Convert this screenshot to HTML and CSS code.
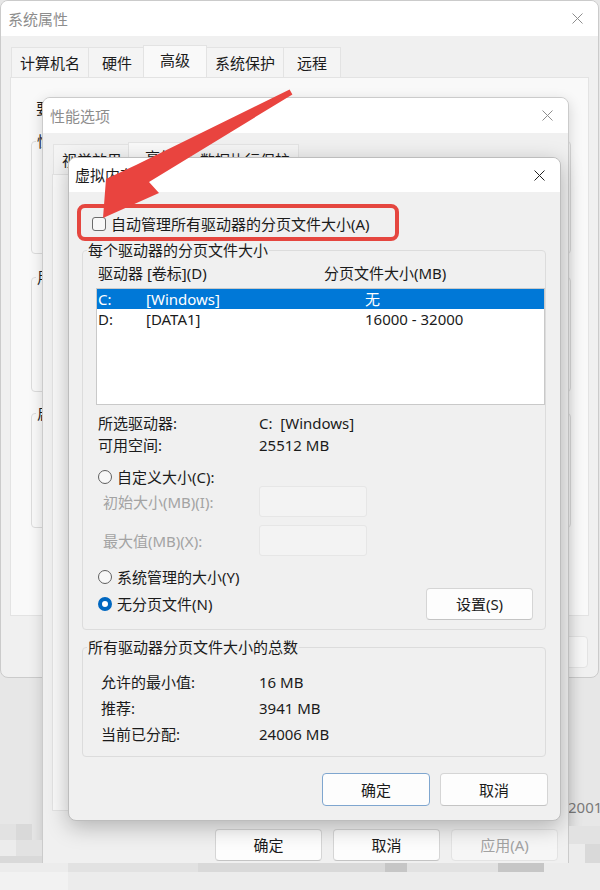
FILE: index.html
```html
<!DOCTYPE html>
<html lang="zh-CN">
<head>
<meta charset="utf-8">
<title>虚拟内存</title>
<link rel="stylesheet" href="styles.css">
</head>
<body>
<div class="bgtext">2001</div>

<div class="win sys">
  <div class="titlebar"><span class="title">系统属性</span><svg class="x" width="11" height="11" viewBox="0 0 11 11"><path d="M0.5 0.5L10.5 10.5M10.5 0.5L0.5 10.5"/></svg></div>
  <div class="tabs">
    <div class="tab">计算机名</div>
    <div class="tab">硬件</div>
    <div class="tab on">高级</div>
    <div class="tab">系统保护</div>
    <div class="tab">远程</div>
  </div>
  <div class="panel">
    <div class="notice">要进行大多数更改，你必须作为管理员登录。</div>
    <fieldset class="sgroup g1"><legend>性能</legend></fieldset>
    <fieldset class="sgroup g2"><legend>用户配置文件</legend></fieldset>
    <fieldset class="sgroup g3"><legend>启动和故障恢复</legend></fieldset>
  </div>
  <div class="footer sysfoot">
    <div class="btn">确定</div>
    <div class="btn">取消</div>
    <div class="btn dis">应用(A)</div>
  </div>
</div>

<div class="win perf">
  <div class="titlebar"><span class="title">性能选项</span><svg class="x" width="11" height="11" viewBox="0 0 11 11"><path d="M0.5 0.5L10.5 10.5M10.5 0.5L0.5 10.5"/></svg></div>
  <div class="tabs">
    <div class="tab">视觉效果</div>
    <div class="tab on">高级</div>
    <div class="tab">数据执行保护</div>
  </div>
  <div class="panel"></div>
  <div class="footer perffoot">
    <div class="btn">确定</div>
    <div class="btn">取消</div>
    <div class="btn dis">应用(A)</div>
  </div>
</div>

<div class="win vm">
  <div class="titlebar"><span class="title">虚拟内存</span><svg class="x" width="11" height="11" viewBox="0 0 11 11"><path d="M0.5 0.5L10.5 10.5M10.5 0.5L0.5 10.5"/></svg></div>
  <div class="vmbody">
    <div class="checkrow"><span class="checkbox"></span>自动管理所有驱动器的分页文件大小(A)</div>

    <fieldset class="group gdrive">
      <legend>每个驱动器的分页文件大小</legend>
      <div class="gbody">
        <div class="colhead"><span>驱动器 [卷标](D)</span><span>分页文件大小(MB)</span></div>
        <div class="list">
          <div class="lrow sel"><span>C:</span><span>[Windows]</span><span>无</span></div>
          <div class="lrow"><span>D:</span><span>[DATA1]</span><span>16000 - 32000</span></div>
        </div>
        <div class="info">
          <span>所选驱动器:</span><span>C:&nbsp;&nbsp;[Windows]</span>
          <span>可用空间:</span><span>25512 MB</span>
        </div>
        <div class="radiorow r1"><span class="radio"></span>自定义大小(C):</div>
        <div class="inrow i1"><span class="dislabel">初始大小(MB)(I):</span><span class="input"></span></div>
        <div class="inrow i2"><span class="dislabel">最大值(MB)(X):</span><span class="input"></span></div>
        <div class="radiorow r2"><span class="radio"></span>系统管理的大小(Y)</div>
        <div class="lastrow">
          <div class="radiorow"><span class="radio on"></span>无分页文件(N)</div>
          <div class="btn set">设置(S)</div>
        </div>
      </div>
    </fieldset>

    <fieldset class="group gtotal">
      <legend>所有驱动器分页文件大小的总数</legend>
      <div class="gbody totals">
        <span>允许的最小值:</span><span>16 MB</span>
        <span>推荐:</span><span>3941 MB</span>
        <span>当前已分配:</span><span>24006 MB</span>
      </div>
    </fieldset>

    <div class="footer vmfoot">
      <div class="btn def">确定</div>
      <div class="btn">取消</div>
    </div>
  </div>
</div>

<div class="mosaic">
  <span class="mb m1" style="left:0;top:824px;width:16px;height:16px"></span>
  <span class="mb m2" style="left:16px;top:824px;width:16px;height:16px"></span>
  <span class="mb m3" style="left:0;top:840px;width:16px;height:16px"></span>
  <span class="mb m1" style="left:16px;top:840px;width:26px;height:16px"></span>
  <span class="mb m2" style="left:0;top:856px;width:42px;height:10px"></span>
  <span class="mb m3" style="left:0;top:863px;width:600px;height:27px"></span>
  <span class="mb m1" style="left:68px;top:863px;width:130px;height:9px"></span>
  <span class="mb m2" style="left:198px;top:863px;width:187px;height:9px"></span>
  <span class="mb m4" style="left:385px;top:863px;width:22px;height:9px"></span>
  <span class="mb m1" style="left:407px;top:863px;width:91px;height:9px"></span>
  <span class="mb m4" style="left:498px;top:863px;width:46px;height:9px"></span>
  <span class="mb m5" style="left:0;top:872px;width:68px;height:18px"></span>
  <span class="mb m1" style="left:569px;top:826px;width:31px;height:18px"></span>
  <span class="mb m3" style="left:569px;top:844px;width:16px;height:19px"></span>
  <span class="mb m2" style="left:585px;top:844px;width:15px;height:19px"></span>
</div>

<svg class="annot" width="600" height="890" viewBox="0 0 600 890">
  <rect x="79" y="206" width="318" height="33" rx="6" ry="6" fill="none" stroke="#e5463f" stroke-width="4"/>
  <polygon points="289.6,89.6 136,165 106,179 103,218 159,193 149,182 292.4,94.4" fill="#e9443f"/>
</svg>
</body>
</html>
```

FILE: styles.css
```css
* { box-sizing: border-box; }

body {
  margin: 0;
  width: 600px;
  height: 890px;
  overflow: hidden;
  position: relative;
  background: #e7e7e7;
  font: 15px/20px "Noto Sans", "Noto Sans CJK SC", sans-serif;
  color: #1b1b1b;
}

.bgtext {
  position: absolute;
  left: 568px;
  top: 797px;
  color: #7a7a7a;
  font-size: 15px;
  z-index: 0;
}

.win {
  position: absolute;
  display: flex;
  flex-direction: column;
  background: #f0f0f0;
  border: 1px solid #cbcbcb;
  border-radius: 8px;
  overflow: hidden;
}

.sys { left: 0; top: 0; width: 599px; height: 678px; z-index: 1; }
.perf { left: 42px; top: 97px; width: 527px; height: 790px; z-index: 2; box-shadow: 0 4px 14px rgba(0,0,0,.16); }
.vm { left: 68px; top: 157px; width: 493px; height: 664px; z-index: 3; border-color: #bdbdbd; box-shadow: 0 6px 22px rgba(0,0,0,.26); }

.titlebar {
  flex: none;
  height: 35px;
  background: #fff;
  display: flex;
  align-items: center;
  justify-content: space-between;
  padding: 0 15px 0 7px;
}
.vm .titlebar { height: 34px; padding: 0 15px 0 6px; }
.title { color: #8d8d8d; }
.vm .title { color: #1b1b1b; }
.x path { stroke: #8d8d8d; stroke-width: 1; fill: none; }
.vm .x path { stroke: #222; }

.tabs {
  flex: none;
  display: flex;
  align-items: flex-end;
  height: 32px;
  margin-top: 9px;
  padding-left: 10px;
}
.tab {
  height: 30px;
  min-width: 58px;
  padding: 0 8px;
  display: flex;
  align-items: center;
  justify-content: center;
  background: #f4f4f4;
  border: 1px solid #e3e3e3;
  border-bottom: none;
  margin-right: -1px;
}
.tab.on {
  position: relative;
  z-index: 1;
  height: 32px;
  min-width: 64px;
  margin: 0 -1px 0 -2px;
  background: #f9f9f9;
  padding-bottom: 3px;
}

.panel {
  flex: none;
  background: #f9f9f9;
  border: 1px solid #e3e3e3;
  margin: 0 9px;
}
.sys .panel { height: 539px; padding: 20px 0 0 20px; }
.perf .panel { height: 637px; }

.notice { margin-left: 5px; white-space: nowrap; }

fieldset {
  margin: 0;
  padding: 0;
  border: 1px solid #dcdcdc;
  border-radius: 4px;
  min-width: 0;
  color: #1b1b1b;
}
legend { padding: 0 1px; margin-left: 4px; line-height: 20px; color: #1b1b1b; }

.sgroup { width: 540px; }
.g1 { margin-top: 13px; height: 123px; }
.g2 { margin-top: 13px; height: 125px; }
.g3 { margin-top: 11px; height: 125px; }

.footer { display: flex; justify-content: flex-end; flex: none; }
.btn {
  height: 32px;
  display: flex;
  align-items: center;
  justify-content: center;
  background: #fdfdfd;
  border: 1px solid #d5d5d5;
  border-bottom-color: #c4c4c4;
  border-radius: 4px;
}
.btn.dis { color: #a2a2a2; background: #f6f6f6; border-color: #e3e3e3; }
.btn.def { border-color: #7fa6cf; }

.sysfoot { margin-top: 20px; padding-right: 10px; gap: 11px; }
.sysfoot .btn { width: 108px; }
.perffoot { margin-top: 18px; padding-right: 10px; gap: 11px; }
.perffoot .btn { width: 107px; }

.vmbody { padding: 0 12px 0 13px; display: flex; flex-direction: column; }

.checkrow {
  margin-top: 22px;
  height: 20px;
  padding-left: 10px;
  display: flex;
  align-items: center;
  gap: 5px;
}
.checkbox {
  width: 14px;
  height: 14px;
  border: 1px solid #6b6b6b;
  border-radius: 3px;
  background: #f8f8f8;
}

.group { margin-right: 2px; }
.gdrive { margin-top: 6px; }
.gdrive .gbody { padding: 0 0 9px 15px; }
.gtotal { margin-top: 7px; }
.gtotal .gbody { padding: 0 0 9px 18px; }

.colhead {
  margin-top: 3px;
  display: grid;
  grid-template-columns: 226px 1fr;
}

.list {
  margin: 5px 0 0 -2px;
  height: 117px;
  background: #fff;
  border: 1px solid #c9c9c9;
}
.lrow {
  height: 20px;
  display: grid;
  grid-template-columns: 48px 219px 1fr;
  padding-left: 1px;
  align-items: center;
}
.lrow.sel { background: #0078d7; color: #fff; }

.info {
  margin-top: 7px;
  display: grid;
  grid-template-columns: 161px 1fr;
  line-height: 22px;
}

.radiorow {
  height: 18px;
  display: flex;
  align-items: center;
  gap: 5px;
}
.r1 { margin-top: 12px; }
.r2 { margin-top: 12px; }
.radio {
  width: 14px;
  height: 14px;
  border: 1px solid #5f5f5f;
  border-radius: 50%;
  background: #f8f8f8;
}
.radio.on {
  border: 4px solid #0067c0;
  background: #fff;
}

.inrow {
  height: 31px;
  display: grid;
  grid-template-columns: 161px 108px;
  align-items: center;
}
.i2 { margin-top: 8px; }
.dislabel { color: #a3a3a3; padding-left: 5px; }
.input {
  height: 31px;
  background: #f3f3f3;
  border: 1px solid #e6e6e6;
  border-radius: 3px;
}

.lastrow {
  margin-top: 2px;
  height: 32px;
  display: flex;
  align-items: center;
  justify-content: space-between;
  padding-right: 12px;
}
.set { width: 107px; }

.totals {
  margin-top: 12px;
  display: grid;
  grid-template-columns: 158px 1fr;
  line-height: 26px;
}

.vmfoot { margin-top: 16px; gap: 10px; }
.vmfoot .btn { width: 108px; height: 33px; }

.mosaic { position: absolute; left: 0; top: 0; width: 600px; height: 890px; pointer-events: none; z-index: 4; }
.mb { position: absolute; display: block; }
.m1 { background: #e2e2e2; }
.m2 { background: #d9d9d9; }
.m3 { background: #ececec; }
.m4 { background: #c6c6c6; }
.m5 { background: #f2f2f2; }

.annot { position: absolute; left: 0; top: 0; pointer-events: none; z-index: 5; }
```
